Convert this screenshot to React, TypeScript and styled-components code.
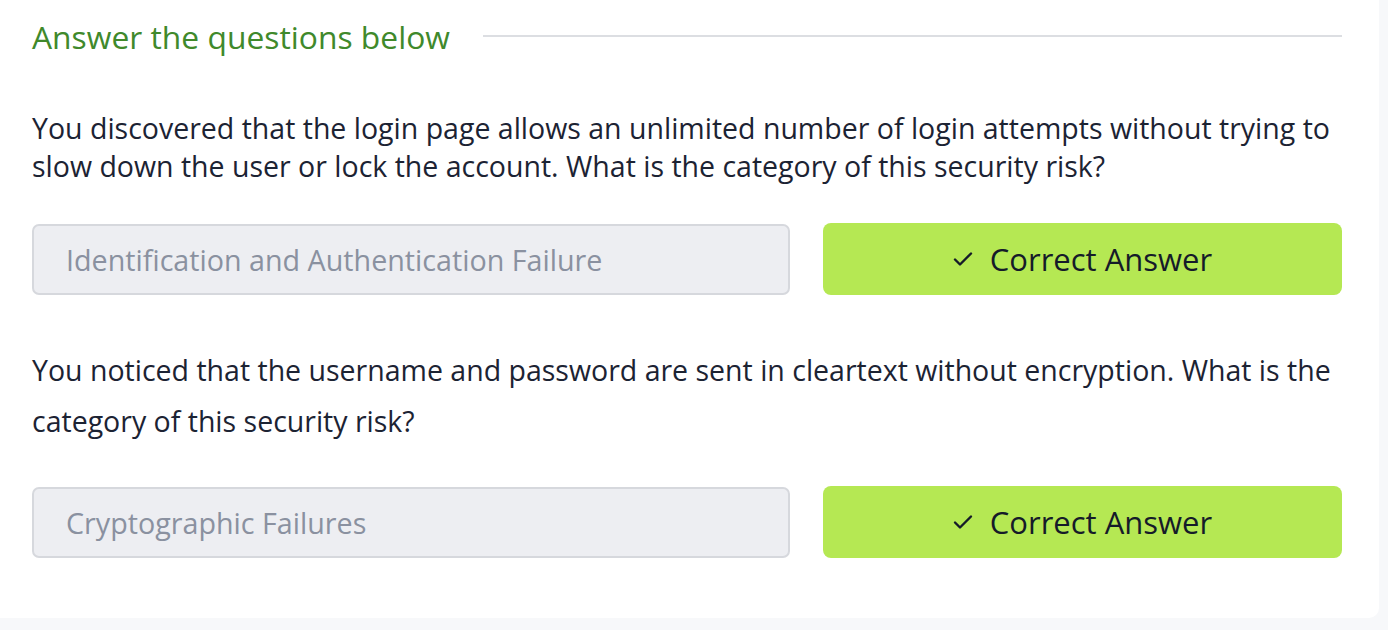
import React from "react";
import styled, { createGlobalStyle } from "styled-components";

const Global = createGlobalStyle`
  html, body { margin: 0; padding: 0; background: #f7f8fa; }
  body { font-family: "Open Sans", "Noto Sans", sans-serif; }
`;

const Page = styled.div`
  width: 1388px;
  height: 630px;
  background: #f7f8fa;
  overflow: hidden;
`;

const Card = styled.section`
  width: 1379px;
  height: 618px;
  box-sizing: border-box;
  background: #ffffff;
  border-bottom-right-radius: 10px;
  padding: 13px 37px 0 32px;
`;

const HeaderRow = styled.div`
  display: flex;
  align-items: center;
  gap: 33px;
  height: 46px;
`;

const Heading = styled.h3`
  margin: 0;
  font-size: 31.8px;
  font-weight: 400;
  color: #40892b;
  white-space: nowrap;
`;

const Rule = styled.div`
  flex: 1;
  height: 2px;
  background: #dcdee2;
`;

const Question = styled.p<{ $lh: number }>`
  margin: 0;
  font-size: 28.5px;
  line-height: ${(p) => p.$lh}px;
  color: #1c2333;
`;

const AnswerRow = styled.div`
  display: flex;
  gap: 33px;
  align-items: center;
`;

const AnswerBox = styled.div`
  flex: 0 0 758px;
  height: 71px;
  box-sizing: border-box;
  display: flex;
  align-items: center;
  padding-left: 32px;
  background: #edeef2;
  border: 2px solid #d6d8dd;
  border-radius: 7px;
  font-size: 28.7px;
  color: #8a91a0;
`;

const CorrectButton = styled.div`
  flex: 1;
  height: 72px;
  display: flex;
  align-items: center;
  justify-content: center;
  gap: 17px;
  background: #b5e853;
  border-radius: 8px;
  font-size: 31px;
  color: #151b29;
`;

const Block = styled.div<{ $top: number }>`
  margin-top: ${(p) => p.$top}px;
`;

const Check = () => (
  <svg width="20" height="16" viewBox="0 0 20 16" fill="none">
    <path d="M2 8.5l5 5L18 2.5" stroke="#151b29" strokeWidth="2.4" strokeLinecap="round" strokeLinejoin="round" />
  </svg>
);

export default function App() {
  return (
    <Page>
      <Global />
      <Card>
        <HeaderRow>
          <Heading>Answer the questions below</Heading>
          <Rule />
        </HeaderRow>
        <Block $top={50}>
          <Question $lh={38}>
            You discovered that the login page allows an unlimited number of login attempts without trying to
            slow down the user or lock the account. What is the category of this security risk?
          </Question>
        </Block>
        <Block $top={38}>
          <AnswerRow>
            <AnswerBox>Identification and Authentication Failure</AnswerBox>
            <CorrectButton>
              <Check />
              Correct Answer
            </CorrectButton>
          </AnswerRow>
        </Block>
        <Block $top={50}>
          <Question $lh={51}>
            You noticed that the username and password are sent in cleartext without encryption. What is the
            category of this security risk?
          </Question>
        </Block>
        <Block $top={39}>
          <AnswerRow>
            <AnswerBox>Cryptographic Failures</AnswerBox>
            <CorrectButton>
              <Check />
              Correct Answer
            </CorrectButton>
          </AnswerRow>
        </Block>
      </Card>
    </Page>
  );
}
